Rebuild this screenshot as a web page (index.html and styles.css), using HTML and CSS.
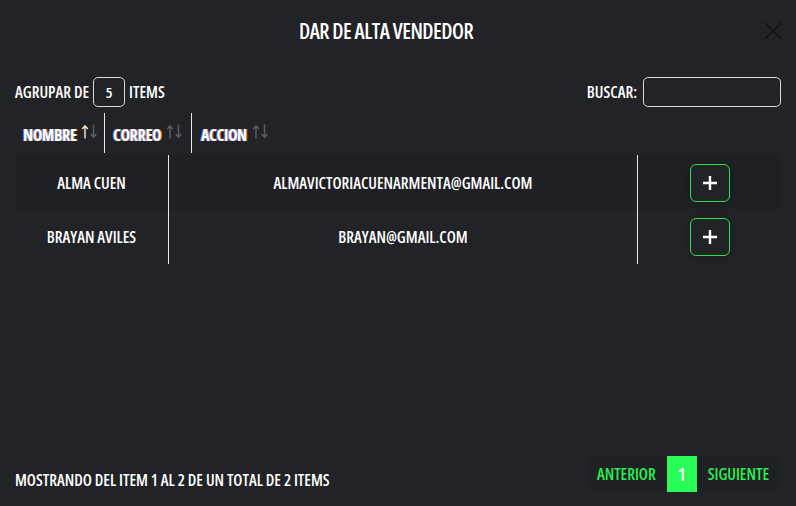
FILE: index.html
```html
<!DOCTYPE html>
<html lang="es">
<head>
<meta charset="utf-8">
<title>Dar de alta vendedor</title>
<link rel="stylesheet" href="styles.css">
</head>
<body>
<div class="modal">
  <header class="modal-head">
    <h1 class="title">DAR DE ALTA VENDEDOR</h1>
    <button class="close" aria-label="Cerrar">
      <svg width="18" height="18" viewBox="0 0 18 18"><path d="M1 1L17 17M17 1L1 17" stroke="#111214" stroke-width="1.6" fill="none"/></svg>
    </button>
  </header>

  <div class="controls">
    <label class="group">AGRUPAR DE <span class="num-box">5</span> ITEMS</label>
    <label class="search">BUSCAR: <span class="search-box"></span></label>
  </div>

  <div class="thead">
    <div class="th th-name"><span class="th-text">NOMBRE</span>
      <svg class="sort" width="17" height="15" viewBox="0 0 17 15"><path class="up on" d="M4 14.5V2M1.2 5L4 1.8L6.8 5"/><path class="down" d="M12.5 0.5V13M9.7 10L12.5 13.2L15.3 10"/></svg>
    </div>
    <div class="th th-mail"><span class="th-text">CORREO</span>
      <svg class="sort" width="17" height="15" viewBox="0 0 17 15"><path class="up" d="M4 14.5V2M1.2 5L4 1.8L6.8 5"/><path class="down" d="M12.5 0.5V13M9.7 10L12.5 13.2L15.3 10"/></svg>
    </div>
    <div class="th th-act"><span class="th-text">ACCION</span>
      <svg class="sort" width="17" height="15" viewBox="0 0 17 15"><path class="up" d="M4 14.5V2M1.2 5L4 1.8L6.8 5"/><path class="down" d="M12.5 0.5V13M9.7 10L12.5 13.2L15.3 10"/></svg>
    </div>
  </div>

  <div class="tbody">
    <div class="row odd">
      <div class="td c-name">ALMA CUEN</div>
      <div class="td c-mail">ALMAVICTORIACUENARMENTA@GMAIL.COM</div>
      <div class="td c-act"><button class="add" aria-label="Agregar"><svg width="16" height="16" viewBox="0 0 16 16"><path d="M8 1V15M1 8H15" stroke="#fff" stroke-width="2.4"/></svg></button></div>
    </div>
    <div class="row">
      <div class="td c-name">BRAYAN AVILES</div>
      <div class="td c-mail">BRAYAN@GMAIL.COM</div>
      <div class="td c-act"><button class="add" aria-label="Agregar"><svg width="16" height="16" viewBox="0 0 16 16"><path d="M8 1V15M1 8H15" stroke="#fff" stroke-width="2.4"/></svg></button></div>
    </div>
  </div>

  <footer class="foot">
    <div class="info">MOSTRANDO DEL ITEM 1 AL 2 DE UN TOTAL DE 2 ITEMS</div>
    <div class="pager">
      <span class="pg-link">ANTERIOR</span>
      <span class="pg-num">1</span>
      <span class="pg-link">SIGUIENTE</span>
    </div>
  </footer>
</div>
</body>
</html>
```

FILE: styles.css
```css
* { box-sizing: border-box; }
html, body { margin: 0; padding: 0; }
body {
  background: #222327;
  color: #ffffff;
  font-family: "Open Sans", "Roboto", sans-serif;
  font-stretch: 75%;
  font-weight: 600;
  font-size: 16px;
  letter-spacing: 0;
  width: 796px;
  height: 506px;
  overflow: hidden;
}
.modal {
  height: 506px;
  display: flex;
  flex-direction: column;
  padding: 0 15px;
}
.modal-head {
  position: relative;
  height: 62px;
  display: flex;
  align-items: center;
  justify-content: center;
  padding-right: 24px;
}
.title {
  margin: 0;
  font-size: 21px;
  font-weight: 600;
  letter-spacing: -0.5px;
  line-height: 1;
}
.close {
  position: absolute;
  right: -1px;
  top: 22px;
  background: none;
  border: 0;
  padding: 0;
  width: 18px;
  height: 18px;
  display: block;
}
.close svg { display: block; }
.controls {
  margin-top: 15px;
  height: 30px;
  display: flex;
  justify-content: space-between;
  align-items: center;
}
.group, .search {
  display: flex;
  align-items: center;
}
.num-box {
  width: 32px;
  height: 30px;
  margin: 0 4px 0 4px;
  border: 1px solid #d8d8d8;
  border-radius: 5px;
  display: flex;
  align-items: center;
  justify-content: center;
  font-weight: 600;
  font-size: 15px;
}
.search-box {
  width: 138px;
  height: 30px;
  border: 1px solid #d8d8d8;
  border-radius: 5px;
  margin-left: 6px;
}
.thead {
  margin-top: 6px;
  height: 40px;
  display: flex;
}
.th {
  display: flex;
  align-items: center;
  padding-left: 8px;
  padding-top: 3px;
  border-right: 1px solid #e8e8e8;
  font-weight: 700;
  font-size: 16px;
  letter-spacing: -0.3px;
}
.th-text {
  text-shadow: -1px 0 0 rgba(70, 120, 255, 0.85), 1px 0 0 rgba(255, 150, 40, 0.85);
}
.th-name { width: 90px; }
.th-mail { width: 87px; }
.th-act { border-right: 0; padding-left: 9px; }
.sort {
  margin-left: 5px;
  margin-top: -7px;
  fill: none;
  stroke: #5c5d61;
  stroke-width: 1.5;
}
.sort .on { stroke: #f2ddc0; }
.tbody {
  margin-top: 1px;
  display: flex;
  flex-direction: column;
}
.row {
  display: flex;
  height: 54px;
}
.row.odd { background: #1f2024; height: 56px; padding-top: 1px; }
.td {
  display: flex;
  align-items: center;
  justify-content: center;
}
.c-name { width: 154px; border-right: 1px solid #e8e8e8; }
.c-mail { width: 469px; border-right: 1px solid #e8e8e8; }
.c-act { flex: 1; }
.add {
  width: 40px;
  height: 38px;
  border: 1px solid #29e34a;
  border-radius: 6px;
  background: #222327;
  padding: 0;
  margin-left: 1px;
  display: flex;
  align-items: center;
  justify-content: center;
  box-shadow: 0 0 6px rgba(0, 0, 0, 0.25);
}
.add svg { display: block; }
.foot {
  margin-top: auto;
  margin-bottom: 14px;
  display: flex;
  justify-content: space-between;
  align-items: flex-end;
}
.info {
  padding-bottom: 1px;
}
.pager {
  display: flex;
  align-items: stretch;
  background: #202125;
  border-radius: 5px;
  padding: 0 12px 0 10px;
  height: 36px;
}
.pg-link {
  color: #2bef4f;
  display: flex;
  align-items: center;
}
.pg-num {
  width: 30px;
  margin: 0 11px;
  background: #28fc56;
  color: #ffffff;
  font-size: 18px;
  display: flex;
  align-items: center;
  justify-content: center;
}
```
